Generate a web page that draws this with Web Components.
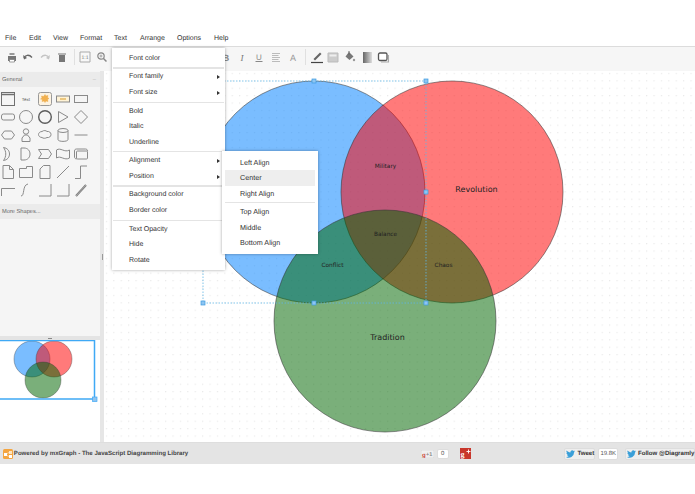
<!DOCTYPE html>
<html><head><meta charset="utf-8">
<style>
html,body{margin:0;padding:0;background:#fff}
body{width:695px;height:494px;overflow:hidden;font-family:"Liberation Sans",Arial,sans-serif;position:relative;text-rendering:geometricPrecision}
app-shell{width:695px;height:494px}
</style></head><body>
<app-shell>
  <menu-bar slot="menubar"></menu-bar>
  <tool-bar slot="toolbar"></tool-bar>
  <shape-sidebar slot="sidebar"></shape-sidebar>
  <diagram-canvas slot="canvas"></diagram-canvas>
  <status-footer slot="footer"></status-footer>
  <pop-menu slot="overlay" style="left:112px;top:48px;width:113px" data-items="Font color|-|Font family>|Font size>|-|Bold|Italic|Underline|-|Alignment>|Position>|-|Background color|Border color|-|Text Opacity|Hide|Rotate"></pop-menu>
  <pop-menu slot="overlay" style="left:222px;top:151px;width:96px" data-small="1" data-items="Left Align|*Center|Right Align|-|Top Align|Middle|Bottom Align"></pop-menu>
</app-shell>
<script>
function def(name, html){
  customElements.define(name, class extends HTMLElement{
    connectedCallback(){
      if(this.shadowRoot) return;
      const r=this.attachShadow({mode:'open'});
      r.innerHTML=typeof html==='function'?html(this):html;
    }
  });
}
def('app-shell',`<style>
:host{display:flex;flex-direction:column;position:relative;overflow:hidden}
.main{display:flex;height:371px}
.split{width:4px;background:#e6e6e6;display:flex;align-items:center;justify-content:center}
.split i{display:block;width:1px;height:6px;background:#999}
.bottom{flex:1;background:#fff}
</style>
<slot name="menubar"></slot><slot name="toolbar"></slot>
<div class="main"><slot name="sidebar"></slot><div class="split"><i></i></div><slot name="canvas"></slot></div>
<slot name="footer"></slot><div class="bottom"></div><slot name="overlay"></slot>`);

def('menu-bar',()=>{
 const items=[['File',24],['Edit',24],['View',27],['Format',34],['Text',26],['Arrange',37],['Options',37],['Help',20]];
 return `<style>:host{display:flex;height:47px;box-sizing:border-box;padding:33px 0 0 5px;background:#fff;border-bottom:1px solid #dcdcdc;font:7px "Liberation Sans",sans-serif;color:#333}
 span{display:block;height:12px;line-height:12px;flex:none}</style>`+items.map(i=>`<span style="width:${i[1]}px">${i[0]}</span>`).join('');
});

const ic=(w,body)=>`<svg width="${w}" height="14" viewBox="0 0 ${w} 14" fill="none">${body}</svg>`;
def('tool-bar',()=>{
 const L=[
 `<path d="M3 6h8v5H3z" fill="#777"/><path d="M4.500 3h5v2h-5z" fill="#999"/><path d="M4.500 9.500h5V12h-5z" fill="#fff" stroke="#777" stroke-width=".7"/>`,
 `<path d="M3 8C4 5 8 4 11 7.500" stroke="#666" stroke-width="1.300"/><path d="M2 5l1 4.500 3-1.500z" fill="#666"/>`,
 `<path d="M11 8C10 5 6 4 3 7.500" stroke="#c4c4c4" stroke-width="1.300"/><path d="M12 5l-1 4.500-3-1.500z" fill="#c4c4c4"/>`,
 `<path d="M4 5h6v7H4z" fill="#777"/><path d="M3 3.500h8v1H3z" fill="#777"/>`,
 `<path d="M2 2h10v10H2z" stroke="#aaa" fill="#f8f8f8"/><text x="7" y="9" font-size="5" text-anchor="middle" fill="#777" font-family="Liberation Sans">1:1</text>`,
 `<circle cx="6" cy="6" r="3.200" stroke="#888" stroke-width="1.200"/><path d="M8.500 8.500l3 3" stroke="#888" stroke-width="1.500"/><path d="M4.500 6h3M6 4.500v3" stroke="#888" stroke-width=".7"/>`];
 const R=[
 `<text x="7" y="10.500" font-size="9" font-weight="bold" text-anchor="middle" fill="#888" font-family="Liberation Sans">B</text>`,
 `<text x="7" y="10.500" font-size="9" font-style="italic" text-anchor="middle" fill="#777" font-family="Liberation Serif">I</text>`,
 `<text x="7" y="9.500" font-size="8" text-anchor="middle" fill="#888" font-family="Liberation Sans">U</text><path d="M3.500 11.500h7" stroke="#888"/>`,
 `<path d="M3 3.500h8M3 5.500h6.500M3 7.500h8M3 9.500h6.500M3 11.500h8" stroke="#bbb"/>`,
 `<text x="7" y="10.500" font-size="9" text-anchor="middle" fill="#999" font-family="Liberation Sans">A</text>`];
 const C=[
 `<path d="M3.500 9L10 2.500l1.500 1.500L5 10.500z" fill="#666"/><path d="M1 12.500h12" stroke="#444" stroke-width="1.200"/>`,
 `<path d="M2 3h10v9H2z" fill="#ccc" stroke="#bbb"/><path d="M3.500 4.500h7v2h-7z" fill="#eee"/>`,
 `<path d="M7 2l4.500 4.500L7.500 10 3.500 6.500z" fill="#777"/><path d="M7 1v4" stroke="#666"/><circle cx="12" cy="10" r="1.200" fill="#999"/>`,
 `<defs><linearGradient id="g"><stop offset="0" stop-color="#666"/><stop offset="1" stop-color="#ddd"/></linearGradient></defs><path d="M3 2h9v11H3z" fill="url(#g)"/>`,
 `<rect x="2.500" y="3" width="8.500" height="7.500" rx="1.500" stroke="#555" stroke-width="1.300" fill="#fff"/><path d="M12.500 5v7H5" stroke="#aaa" stroke-width="1.100"/>`];
 return `<style>:host{display:flex;align-items:center;height:24px;background:#f6f6f6;box-sizing:border-box;padding-bottom:4px}
 svg{display:block;flex:none}.sep{width:1px;height:16px;background:#e0e0e0;flex:none}</style>
 <div style="width:5px"></div>
 ${ic(14,L[0])}<div style="width:2px"></div>${ic(14,L[1])}<div style="width:3px"></div>${ic(14,L[2])}<div style="width:3px"></div>${ic(14,L[3])}
 <div style="width:5px"></div><div class="sep"></div><div style="width:3px"></div>${ic(14,L[4])}<div style="width:3px"></div>${ic(14,L[5])}
 <div style="width:110px"></div>
 ${ic(14,R[0])}<div style="width:2px"></div>${ic(14,R[1])}<div style="width:3px"></div>${ic(14,R[2])}<div style="width:3px"></div>${ic(14,R[3])}<div style="width:3px"></div>${ic(14,R[4])}
 <div style="width:5px"></div><div class="sep"></div><div style="width:4px"></div>
 ${ic(14,C[0])}<div style="width:2px"></div>${ic(14,C[1])}<div style="width:2px"></div>${ic(14,C[2])}<div style="width:4px"></div>${ic(14,C[3])}<div style="width:2px"></div>${ic(14,C[4])}`;
});

const S='#8a8a8a';
const shapes=[
`<rect x="1.500" y="1.500" width="13" height="13" stroke="#707070"/><path d="M1.500 3.500h13" stroke="#707070" stroke-width="1.500"/>`,
`<text x="8" y="10" font-size="4.500" text-anchor="middle" fill="#555" stroke="none" font-family="Liberation Sans">Text</text>`,
`<rect x="1.500" y="1.500" width="13" height="13" rx="2" fill="#fdf3e2" stroke="#999"/><path d="M8 3.500l1 1.500 2-.5-.5 2 1.500 1-1.500 1 .5 2-2-.5-1 1.500-1-1.500-2 .5.500-2L3.500 8 5 7l-.5-2 2 .5z" fill="#f2b04e" stroke="#e9a53c" stroke-width=".4"/>`,
`<rect x="1.500" y="5" width="13" height="6" stroke="${S}" fill="#fff3d6"/><path d="M5 8h6" stroke="#e6b860" stroke-width="1.500"/>`,
`<rect x="1.500" y="4.500" width="13" height="7" stroke="${S}"/>`,
`<rect x="1.500" y="5" width="13" height="6" rx="2" stroke="${S}"/>`,
`<circle cx="8" cy="8" r="6.500" stroke="${S}"/>`,
`<circle cx="8" cy="8" r="6.300" stroke="#5c5c5c" stroke-width="1.400"/>`,
`<path d="M3.500 2.500v11L13 8z" stroke="${S}"/>`,
`<path d="M8 1.500L14.500 8 8 14.500 1.500 8z" stroke="${S}"/>`,
`<path d="M4.500 4h7l3 4-3 4h-7l-3-4z" stroke="${S}"/>`,
`<circle cx="8" cy="4.500" r="2.700" stroke="${S}"/><path d="M4 14.500v-3.500l2.500-3h3L12 11v3.500z" stroke="${S}"/>`,
`<path d="M5 4.500c2-1.500 4-1 5 0 2-.5 4 1 4 3s-2 3.500-4 3c-1.500 1-4 1-5 0-2 0-3.500-1.500-3.500-3S3 4.500 5 4.500z" stroke="${S}"/>`,
`<path d="M3 3.500v9c0 2.500 10 2.500 10 0v-9" stroke="${S}"/><ellipse cx="8" cy="3.500" rx="5" ry="2" stroke="${S}"/>`,
`<path d="M1.500 8h13" stroke="${S}"/>`,
`<path d="M3.500 1.500c8 1 8 12 0 13 3-4 3-9 0-13z" stroke="${S}"/>`,
`<path d="M3 2h3c8 0 8 12 0 12H3z" stroke="${S}"/>`,
`<path d="M1.500 3.500h10l3 4.500-3 4.500h-10l3-4.500z" stroke="${S}"/>`,
`<path d="M1.500 4c4-3 8 3 13 0v8c-5 3-9-3-13 0z" stroke="${S}"/>`,
`<rect x="3.500" y="5" width="11" height="8" rx="1" stroke="${S}"/><path d="M1.500 5c0-1.500 1-2 2-2h9c1 0 2 .5 2 2M1.500 5v6c0 1 1 2 2 2" stroke="${S}"/>`,
`<path d="M3 1.500h6.500l4 4v9H3zM9.500 1.500v4h4" stroke="${S}"/>`,
`<path d="M1.500 4.500h7V2.500h6v11h-13z" stroke="${S}"/>`,
`<path d="M6.500 1.500h6.500v13H3V5z" stroke="${S}"/>`,
`<path d="M2 14L14 2" stroke="${S}"/>`,
`<path d="M2 14.500h5.500V2H14" stroke="${S}"/>`,
`<path d="M1.500 14V6.500H15" stroke="${S}"/>`,
`<path d="M3 14c4 0 1-11 7-12" stroke="${S}"/>`,
`<path d="M2 14h12V2" stroke="${S}"/>`,
`<path d="M2 14h12V2" stroke="${S}"/>`,
`<path d="M3 14L13 3" stroke="#777" stroke-width="2"/><path d="M3 14L13 3" stroke="#ccc" stroke-width=".6"/>`];
def('shape-sidebar',`<style>
:host{display:flex;flex-direction:column;width:100px;height:371px;background:#f5f5f5;font:5.700px "Liberation Sans",sans-serif;color:#666;flex:none}
.h{height:15px;line-height:16.500px;padding-left:2px;background:#ebebeb;display:flex;justify-content:space-between;padding-right:4px}
.grid{display:grid;grid-template-columns:repeat(5,18.300px);grid-auto-rows:18.200px;padding:3px 0 0 0;height:114px;margin-left:-1px;justify-items:center;align-items:center}
.grid svg{width:16px;height:16px;display:block}
.fill{height:117px}
.div{height:4px;background:#e4e4e4;display:flex;justify-content:center;align-items:center}
.div i{width:4px;height:1px;background:#888;display:block}
.out{flex:1;background:#fff}
.out svg{display:block}
</style>
<div style="height:1px"></div>
<div class="h"><span>General</span><span style="color:#bbb">–</span></div>
<div class="grid">${shapes.map(s=>`<svg viewBox="0 0 16 16" fill="none">${s}</svg>`).join('')}</div>
<div class="h"><span>More Shapes...</span></div>
<div class="fill"></div>
<div class="div"><i></i></div>
<div class="out"><svg width="100" height="102" viewBox="0 340 100 102">
<g stroke="#333" stroke-opacity=".5" stroke-width=".7">
<circle cx="32" cy="359" r="18" fill="#0080ff" fill-opacity=".52"/>
<circle cx="54" cy="359" r="18" fill="#ff0000" fill-opacity=".52"/>
<circle cx="43" cy="380" r="18" fill="#006600" fill-opacity=".52"/></g>
<path d="M0 340.500H94.500V399H0" fill="none" stroke="#3fa9f5" stroke-width="1.500"/>
<rect x="92.500" y="397" width="4.500" height="4.500" fill="#8fc4f0" stroke="#3fa9f5" stroke-width=".7"/>
</svg></div>`);

def('diagram-canvas',`<style>:host{display:block;width:591px;height:371px;background:#fff;overflow:hidden}svg{display:block}text{font-family:"DejaVu Sans",sans-serif;fill:#222}</style>
<svg width="591" height="371" viewBox="104 71 591 371">
<defs><pattern id="dots" x="104" y="71" width="7.400" height="7.400" patternUnits="userSpaceOnUse"><rect x="2" y="2" width="1" height="1" fill="#e0e0e0"/></pattern></defs>
<rect x="104" y="71" width="591" height="371" fill="url(#dots)"/>
<g stroke="#333" stroke-opacity=".55" stroke-width="1">
<circle cx="314" cy="192" r="111" fill="#0080ff" fill-opacity=".52"/>
<circle cx="452" cy="192" r="111" fill="#ff0000" fill-opacity=".52"/>
<circle cx="385" cy="321" r="111" fill="#006600" fill-opacity=".52"/>
</g>
<text x="476.500" y="192" font-size="8" text-anchor="middle">Revolution</text>
<text x="387.500" y="339.500" font-size="8" text-anchor="middle">Tradition</text>
<g font-size="5.800" text-anchor="middle">
<text x="385.500" y="168">Military</text><text x="385.500" y="235.500">Balance</text><text x="332.500" y="267">Conflict</text><text x="443.500" y="267">Chaos</text></g>
<path d="M203 81H426V303H203z" fill="none" stroke="#5fb6e6" stroke-width=".8" stroke-dasharray="1.500 1.500"/>
<g fill="#8ec5f2" stroke="#3d9be0" stroke-width=".7">
<rect x="312" y="79" width="4" height="4"/><rect x="424" y="79" width="4" height="4"/><rect x="424" y="190" width="4" height="4"/>
<rect x="201" y="301" width="4" height="4"/><rect x="312" y="301" width="4" height="4"/><rect x="424" y="301" width="4" height="4"/></g>
</svg>`);

const bird=`<svg width="9" height="8" viewBox="0 0 24 20"><path d="M24 2.400c-.9.400-1.800.7-2.800.8 1-.6 1.800-1.600 2.200-2.700-1 .6-2 1-3.100 1.200A4.900 4.900 0 0 0 11.900 6.100C7.800 5.900 4.200 3.900 1.700.9.400 3.200 1 6.100 3.200 7.500c-.8 0-1.600-.2-2.200-.6 0 2.300 1.600 4.400 3.900 4.900-.7.200-1.500.2-2.200.1.600 2 2.400 3.400 4.600 3.400A9.900 9.900 0 0 1 0 17.800 14 14 0 0 0 21.500 5.400c1-.7 1.900-1.700 2.500-3z" fill="#3a9fd8"/></svg>`;
def('status-footer',`<style>
:host{display:flex;align-items:center;height:22px;background:#e4e4e4;flex:none;font:bold 6.100px "Liberation Sans",sans-serif;color:#444;border-top:1px solid #dedede;box-sizing:border-box}
svg{display:block;flex:none}
.btn{background:#eee;border:1px solid #ddd;border-radius:2px;height:10px;line-height:10px;display:flex;align-items:center;gap:2px;padding:0 1px;color:#333;flex:none;white-space:nowrap}
.cnt{background:#fff;border:1px solid #ddd;border-radius:2px;height:10px;line-height:10px;font-weight:normal;text-align:center;font-size:6px;color:#555;flex:none}
</style>
<div style="width:3px"></div>
<svg width="10" height="10" viewBox="0 0 10 10"><rect width="10" height="10" rx="1.500" fill="#f4a540"/><rect x="1" y="4" width="3" height="3" fill="#fff"/><rect x="6" y="2" width="3" height="3" fill="#fde3bd"/><rect x="6" y="6" width="3" height="3" fill="#fff"/><path d="M3 5l4-2M3 6l4 2" stroke="#fff" stroke-width=".5"/></svg>
<div style="width:1px"></div>
<span style="width:407px;white-space:nowrap;flex:none">Powered by mxGraph - The JavaScript Diagramming Library</span>
<svg width="13" height="8" viewBox="0 0 13 8"><rect width="13" height="8" rx="1" fill="#f0f0f0" stroke="#ccc" stroke-width=".5"/><text x="1" y="6.500" font-size="6" fill="#c9493b" font-family="Liberation Sans">g</text><text x="5" y="6" font-size="5.500" fill="#888" font-family="Liberation Sans">+1</text></svg>
<div style="width:3px"></div>
<div class="cnt" style="width:10px;height:8px;line-height:8px">0</div>
<div style="width:12px"></div>
<svg width="11" height="11" viewBox="0 0 11 11"><rect width="11" height="11" fill="#c8372c"/><text x=".5" y="8.500" font-size="8" font-weight="bold" fill="#fff" font-family="Liberation Serif">g</text><path d="M6.500 3.500h4M8.500 1.500v4" stroke="#fff" stroke-width=".9"/></svg>
<div style="width:97px"></div>
<div class="btn" style="width:27px">${bird}<span>Tweet</span></div>
<div style="width:3px"></div>
<div class="cnt" style="width:18px">19.8K</div>
<div style="width:7px"></div>
<div class="btn" style="width:66px">${bird}<span>Follow @Diagramly</span></div>`);

def('pop-menu',(el)=>{
 const small=!!el.dataset.small;
 const rows=el.dataset.items.split('|').map(t=>{
   if(t==='-') return '<div class="sep"></div>';
   let cls='it',arrow='';
   if(t[0]==='*'){cls+=' on';t=t.slice(1);}
   if(t.endsWith('>')){t=t.slice(0,-1);arrow='<i></i>';}
   return `<div class="${cls}">${t}${arrow}</div>`;
 }).join('');
 return `<style>
 :host{display:block;position:absolute;background:#fff;box-shadow:0 0 3px rgba(0,0,0,.35);font:${small?'7.200px':'7px'} "Liberation Sans",sans-serif;color:#333;box-sizing:border-box;padding:${small?'3.500px 0 3px':'2.750px 0 2px'}}
 .it{height:15.500px;line-height:15.500px;padding-left:${small?'15px':'17px'};margin:0 ${small?'3px':'0'};position:relative}
 .on{background:#eee}
 .sep{height:1.200px;background:#e4e4e4;margin:1.200px ${small?'3px':'1px'} .8px}
 i{position:absolute;right:5px;top:6px;border-left:3px solid #333;border-top:2px solid transparent;border-bottom:2px solid transparent}
 </style>${rows}`;
});
</script>
</body></html>
